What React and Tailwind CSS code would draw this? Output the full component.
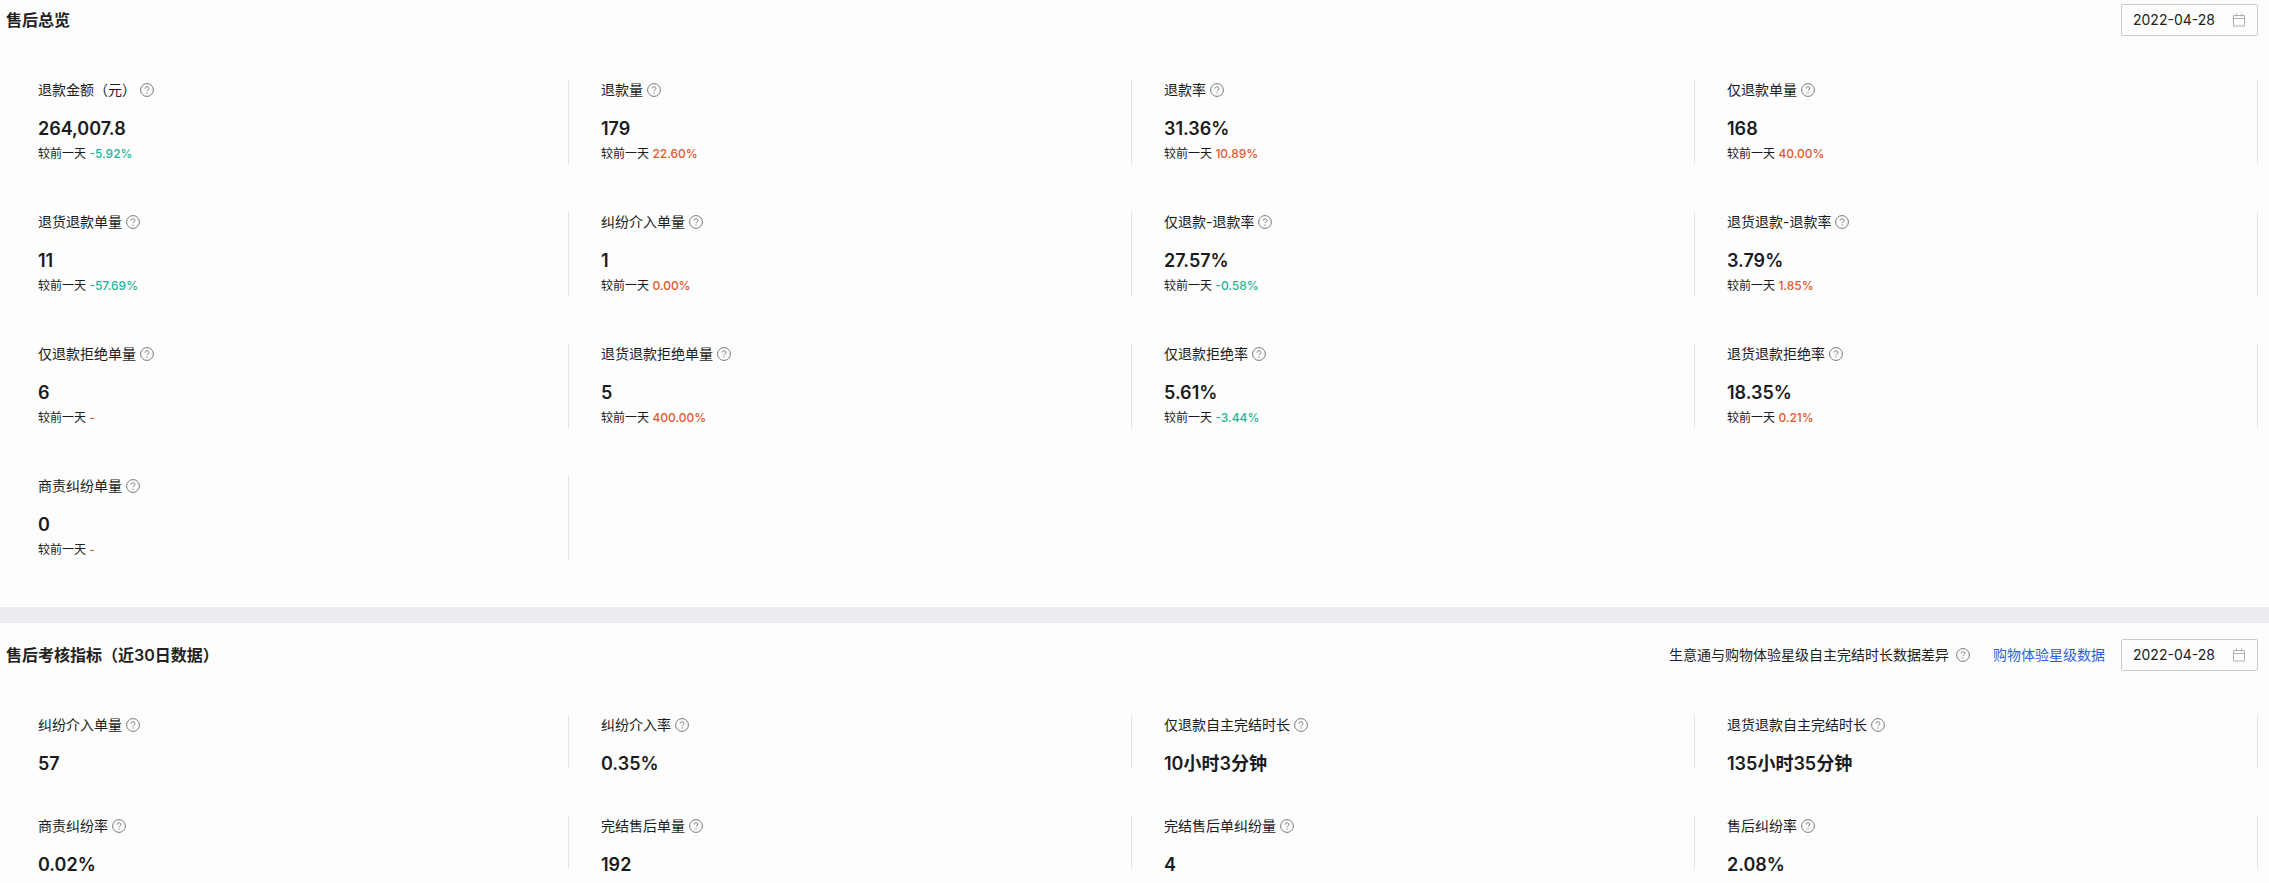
import React from 'react';

const overview = [
  { label: '退款金额（元）', value: '264,007.8', change: '-5.92%' },
  { label: '退款量', value: '179', change: '22.60%' },
  { label: '退款率', value: '31.36%', change: '10.89%' },
  { label: '仅退款单量', value: '168', change: '40.00%' },
  { label: '退货退款单量', value: '11', change: '-57.69%' },
  { label: '纠纷介入单量', value: '1', change: '0.00%' },
  { label: '仅退款-退款率', value: '27.57%', change: '-0.58%' },
  { label: '退货退款-退款率', value: '3.79%', change: '1.85%' },
  { label: '仅退款拒绝单量', value: '6', change: '-' },
  { label: '退货退款拒绝单量', value: '5', change: '400.00%' },
  { label: '仅退款拒绝率', value: '5.61%', change: '-3.44%' },
  { label: '退货退款拒绝率', value: '18.35%', change: '0.21%' },
  { label: '商责纠纷单量', value: '0', change: '-' },
];

const assessment = [
  { label: '纠纷介入单量', value: '57' },
  { label: '纠纷介入率', value: '0.35%' },
  { label: '仅退款自主完结时长', value: '10小时3分钟' },
  { label: '退货退款自主完结时长', value: '135小时35分钟' },
  { label: '商责纠纷率', value: '0.02%' },
  { label: '完结售后单量', value: '192' },
  { label: '完结售后单纠纷量', value: '4' },
  { label: '售后纠纷率', value: '2.08%' },
];

function HelpButton({ label }) {
  return (
    <button type="button" aria-label={label} className="shrink-0 text-[#77797d]">
      <svg viewBox="0 0 14 14" className="block w-[14px] h-[14px]" fill="none" stroke="currentColor">
        <circle cx="7" cy="7" r="6.4" />
        <path d="M5.1 5.6c0-1.1.8-1.8 1.9-1.8s1.9.7 1.9 1.7c0 .8-.5 1.2-1.1 1.6-.5.3-.8.6-.8 1.1" />
        <circle cx="7" cy="9.9" r="0.6" fill="currentColor" stroke="none" />
      </svg>
    </button>
  );
}

function CalendarIcon() {
  return (
    <svg viewBox="0 0 14 14" className="w-[14px] h-[14px] shrink-0" fill="none" stroke="#b0b0b0">
      <path d="M1.5 2.5h11v10.5h-11zM1.5 5.5h11M4.5 0.5v3M9.5 0.5v3" />
    </svg>
  );
}

function DateField({ label }) {
  return (
    <label className="flex items-center w-[137px] h-8 px-[11px] border border-[#cacaca] rounded-xs">
      <input
        type="text"
        aria-label={label}
        defaultValue="2022-04-28"
        className="min-w-0 flex-1 bg-transparent text-sm text-[#222] outline-none"
      />
      <CalendarIcon />
    </label>
  );
}

function Change({ value }) {
  const down = value.startsWith('-') && value !== '-';
  return (
    <p className="mt-[2px] text-xs leading-5">
      较前一天{' '}
      <span className={down ? 'font-medium text-[#1fb597]' : 'font-medium text-[#e0592a]'}>{value}</span>
    </p>
  );
}

function Metric({ item }) {
  return (
    <div className={`pl-8 border-r border-[#e2e3e6] ${item.change ? 'h-[84px]' : 'h-[53px]'}`}>
      <div className="flex items-center gap-1 text-sm leading-5">
        <span>{item.label}</span>
        <HelpButton label={item.label} />
      </div>
      <p className="mt-4 text-lg leading-[26px] font-semibold">{item.value}</p>
      {item.change && <Change value={item.change} />}
    </div>
  );
}

function MetricGrid({ items }) {
  return (
    <div className="grid grid-cols-4 gap-y-12 mt-11">
      {items.map((item) => (
        <Metric key={item.label} item={item} />
      ))}
    </div>
  );
}

export default function App() {
  return (
    <main className="min-h-screen bg-[#fdfdfd] text-[#1a1c21] font-['Inter','Noto_Sans_CJK_SC',sans-serif]">
      <section className="pt-1 pl-[6px] pr-[11px] pb-[47px]">
        <header className="flex items-center justify-between">
          <h2 className="text-base leading-6 font-semibold text-[#222]">售后总览</h2>
          <DateField label="售后总览日期" />
        </header>
        <MetricGrid items={overview} />
      </section>

      <div className="h-4 bg-[#ecedf0]" />

      <section className="pt-4 pl-[6px] pr-[11px] pb-3">
        <header className="flex items-center justify-between">
          <h2 className="text-base leading-6 font-semibold text-[#222]">售后考核指标（近30日数据）</h2>
          <div className="flex items-center text-sm text-[#222]">
            <span className="mr-[7px]">生意通与购物体验星级自主完结时长数据差异</span>
            <HelpButton label="数据差异说明" />
            <a href="#" className="ml-[23px] mr-4 text-[#2f5fe0]">购物体验星级数据</a>
            <DateField label="售后考核日期" />
          </div>
        </header>
        <MetricGrid items={assessment} />
      </section>
    </main>
  );
}
